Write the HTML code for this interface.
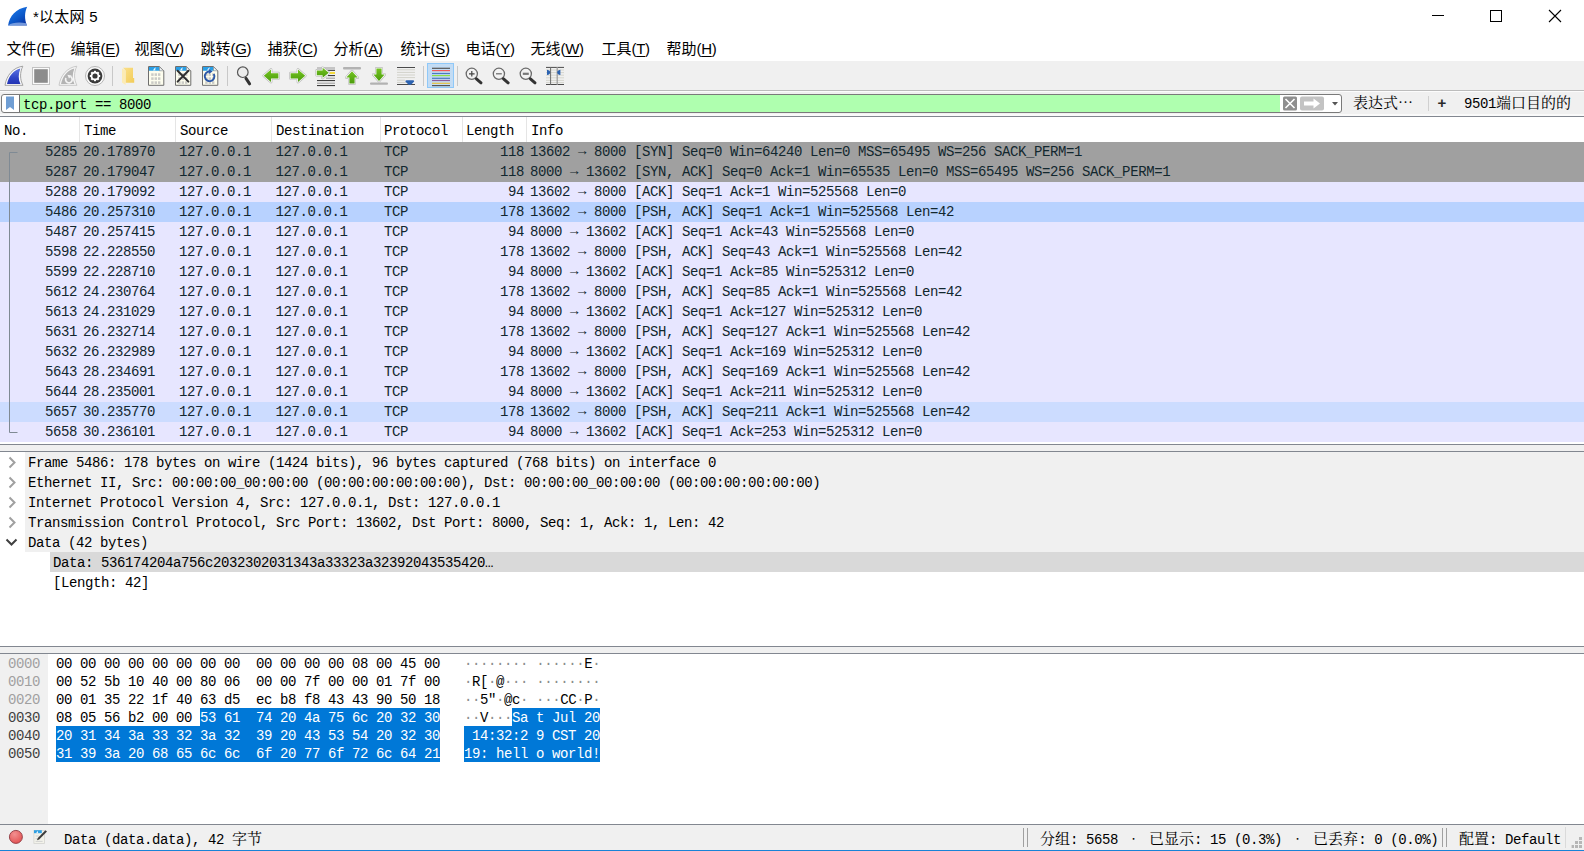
<!DOCTYPE html>
<html lang="zh-CN"><head><meta charset="utf-8"><title>*以太网 5</title>
<style>
*{box-sizing:border-box;margin:0;padding:0}
html,body{width:1584px;height:851px;overflow:hidden;background:#fff}
body{position:relative;font-family:"Liberation Sans","Noto Sans CJK SC",sans-serif;color:#000}
.abs{position:absolute}
.ui{font-family:"Liberation Sans","Noto Sans CJK SC",sans-serif;font-size:15px;white-space:pre}
.mono{font-family:"Liberation Mono","Noto Sans CJK SC",monospace;font-size:14px;letter-spacing:-0.4px;white-space:pre}
.sim{font-family:"Liberation Mono","Noto Serif CJK SC",monospace;font-size:14px;letter-spacing:-0.4px;white-space:pre}
.sim b{font-family:"Noto Serif CJK SC","Noto Sans CJK SC",serif;font-weight:normal;font-size:15px;letter-spacing:0;line-height:0}
.sim em{font-family:"Noto Serif CJK SC","Noto Sans CJK SC",serif;font-style:normal;display:inline-block;width:15px;text-align:center;letter-spacing:0;line-height:0}
#title{left:33px;top:5.5px;height:22px;line-height:22px;font-size:15px;letter-spacing:0.25px}
#menu span{position:absolute;top:38px;height:22px;line-height:22px}
#menu u{text-decoration:underline;text-underline-offset:2px}
#menu i{font-style:normal;letter-spacing:-0.3px}
#tb{left:0;top:61px;width:1584px;height:29px;background:#f0f0f0}
#tbline{left:0;top:90px;width:1584px;height:1px;background:#bcbcbc}
#fbar{left:0;top:91px;width:1584px;height:25px;background:#f0f0f0;border-top:1px solid #fcfcfc;border-bottom:2px solid #fafafa}
#fbox{left:1px;top:94px;width:1341px;height:19px;border:1px solid #7a7a7a;border-radius:3px;background:#fff;overflow:hidden}
#fgreen{left:18px;top:0;width:1260px;height:17px;background:#afffaf}
#hdrline{left:0;top:116px;width:1584px;height:1px;background:#828790}
#hdr{left:0;top:117px;width:1584px;height:25px;background:#fff}
#hdr span{position:absolute;top:0;height:25px;line-height:28px}
#hdr i{position:absolute;top:0;width:1px;height:25px;background:#e5e5e5}
.row{left:0;width:1584px;height:20px;line-height:20px}
.row span{position:absolute;top:0;height:20px}
.row bdi{position:relative;top:-1.5px}
#plist{color:#12272e}
.g{background:#a0a0a0}.l{background:#e7e6ff}.s{background:#b8d2ff}.h{background:#ccdcff}
.line{left:0;width:1584px;height:1px;background:#828790}
.split{left:0;width:1584px;background:#f0f0f0}
.drow{height:20px;line-height:22px}
.hx{height:18px;line-height:20px}
.sel{background:#0078d7;color:#fff}
.off{color:#a0a0a0}.offs{color:#404040}
.dot{color:#8c8c8c}
#status{left:0;top:825px;width:1584px;height:25px;background:#f0f0f0}
#status span{position:absolute;top:0;height:25px;line-height:30px}
#blue{left:0;top:850px;width:1584px;height:1px;background:#1883d7}
</style></head>
<body>
<svg class="abs" style="left:7px;top:6px" width="22" height="21" viewBox="0 0 22 21">
<defs><linearGradient id="fg" x1="0.2" y1="0" x2="0.9" y2="1"><stop offset="0" stop-color="#1c7cf0"/><stop offset="0.55" stop-color="#0c58c8"/><stop offset="1" stop-color="#0a30a0"/></linearGradient></defs>
<path d="M1.1 19.5 C2.5 10 9 2.5 20.2 0.8 C17.6 6 17.2 13 20 19.5 Z" fill="url(#fg)"/>
<path d="M1.1 19.5 C5 16.4 12 16 19.2 17.2 L20 19.5 Z" fill="#86a8e4" opacity="0.85"/>
</svg>
<div id="title" class="abs ui">*以太网 5</div>
<svg class="abs" style="left:1384px;top:0" width="200" height="32" viewBox="0 0 200 32">
<path d="M48 15.5 H60" stroke="#000" stroke-width="1" fill="none"/>
<rect x="106.5" y="10.5" width="11" height="11" stroke="#000" stroke-width="1" fill="none"/>
<path d="M165 10 L177 22 M177 10 L165 22" stroke="#000" stroke-width="1.1" fill="none"/>
</svg>
<div id="menu" class="ui"><span style="left:6.5px">文件<i>(<u>F</u>)</i></span><span style="left:70.5px">编辑<i>(<u>E</u>)</i></span><span style="left:134.5px">视图<i>(<u>V</u>)</i></span><span style="left:200.5px">跳转<i>(<u>G</u>)</i></span><span style="left:267.5px">捕获<i>(<u>C</u>)</i></span><span style="left:333.5px">分析<i>(<u>A</u>)</i></span><span style="left:400.5px">统计<i>(<u>S</u>)</i></span><span style="left:465.5px">电话<i>(<u>Y</u>)</i></span><span style="left:530.5px">无线<i>(<u>W</u>)</i></span><span style="left:601.5px">工具<i>(<u>T</u>)</i></span><span style="left:666.5px">帮助<i>(<u>H</u>)</i></span></div>
<div id="tb" class="abs"></div><div id="tbline" class="abs"></div>
<svg class="abs" style="left:0;top:61px" width="580" height="29" viewBox="0 61 580 29">
<defs>
<linearGradient id="bl" x1="0" y1="0" x2="0" y2="1"><stop offset="0" stop-color="#5c74e4"/><stop offset="0.6" stop-color="#2f45c6"/><stop offset="1" stop-color="#2334b4"/></linearGradient>
<linearGradient id="gr" x1="0" y1="0" x2="0" y2="1"><stop offset="0" stop-color="#74c422"/><stop offset="1" stop-color="#4c9c0c"/></linearGradient>
<linearGradient id="fo" x1="0" y1="0" x2="1" y2="1"><stop offset="0" stop-color="#fbe08a"/><stop offset="1" stop-color="#f2cc58"/></linearGradient>
</defs>
<!-- start capture -->
<path d="M5 85.3 C6.5 75.5 13 67.5 22.8 66.2 C19.8 72.5 19.8 79.5 23 85.3 Z" fill="#fafafa" stroke="#9a9a9a" stroke-width="0.9"/>
<path d="M7 84 C8.6 76 13.6 70 20.4 68.4 C18.2 73.5 18.2 79.3 20.4 84 Z" fill="url(#bl)"/>
<!-- stop -->
<rect x="32.5" y="67.5" width="17" height="17" fill="#fbfbfb" stroke="#c2c2c2" stroke-width="1"/>
<rect x="34.2" y="69.2" width="13.6" height="13.6" fill="#8c8c8c"/>
<!-- restart -->
<path d="M59 85.3 C60.5 75.5 67 67.5 76.8 66.2 C73.8 72.5 73.8 79.5 77 85.3 Z" fill="#f6f6f6" stroke="#c4c4c4" stroke-width="0.9"/>
<path d="M61 84 C62.6 76 67.6 70 74.4 68.4 C72.2 73.5 72.2 79.3 74.4 84 Z" fill="#b4b4b4"/>
<path d="M66 78 A3.3 3.3 0 1 0 70.4 76.6" stroke="#f4f4f4" stroke-width="1.7" fill="none"/><path d="M67.4 74.8 L71.6 75.4 L69 78.4 Z" fill="#f4f4f4"/>
<!-- options gear -->
<circle cx="95" cy="76" r="9.5" fill="#fafafa" stroke="#b0b0b0" stroke-width="0.9"/>
<circle cx="95" cy="76" r="7.4" fill="#3a3a3a"/>
<g stroke="#fff" stroke-width="2.2" stroke-linecap="butt"><path d="M95 70.8 V81.2"/><path d="M89.8 76 H100.2"/><path d="M91.32 72.32 L98.68 79.68"/><path d="M98.68 72.32 L91.32 79.68"/></g>
<circle cx="95" cy="76" r="4.3" fill="#fff"/><circle cx="95" cy="76" r="2.6" fill="#3a3a3a"/>
<path d="M112.5 66 V86" stroke="#c8c8c8" stroke-width="1"/>
<!-- folder -->
<path d="M123 67.8 H133 V78 H134.2 V82.8 H125.5 V70.5 Z" fill="url(#fo)"/>
<path d="M122 68.4 L125.6 70.6 V85 L122 82.6 Z" fill="#fcebb4"/>
<!-- file icons -->
<g transform="translate(148 66)"><path d="M0.5 0.5 H11.5 L15.8 4.8 V19.3 H0.5 Z" fill="#fdfdee" stroke="#6e6e6e" stroke-width="1"/><path d="M1 1 H11.3 L13.6 3.3 V4.8 H1 Z" fill="#2a9fe6"/><path d="M5 4.6 Q5.8 2.2 8 1.2 Q6.8 3 7.4 4.6 Z" fill="#e8f4fd"/><path d="M11.5 0.8 V4.8 H15.5 Z" fill="#f4f4f4" stroke="#8a8a8a" stroke-width="0.6"/><g fill="#cbcbc6"><rect x="3.2" y="7.3" width="2.4" height="2.6"/><rect x="6.6" y="7.3" width="2.4" height="2.6"/><rect x="10" y="7.3" width="2.4" height="2.6"/><rect x="3.2" y="11.3" width="2.4" height="2.6"/><rect x="6.6" y="11.3" width="2.4" height="2.6"/><rect x="10" y="11.3" width="2.4" height="2.6"/><rect x="3.2" y="15.3" width="2.4" height="2.6"/><rect x="6.6" y="15.3" width="2.4" height="2.6"/><rect x="10" y="15.3" width="2.4" height="2.6"/></g></g>
<g transform="translate(175 66)"><path d="M0.5 0.5 H11.5 L15.8 4.8 V19.3 H0.5 Z" fill="#fdfdee" stroke="#6e6e6e" stroke-width="1"/><path d="M1 1 H11.3 L13.6 3.3 V4.8 H1 Z" fill="#2a9fe6"/><path d="M5 4.6 Q5.8 2.2 8 1.2 Q6.8 3 7.4 4.6 Z" fill="#e8f4fd"/><path d="M11.5 0.8 V4.8 H15.5 Z" fill="#f4f4f4" stroke="#8a8a8a" stroke-width="0.6"/><g fill="#cbcbc6"><rect x="3.2" y="7.3" width="2.4" height="2.6"/><rect x="6.6" y="7.3" width="2.4" height="2.6"/><rect x="10" y="7.3" width="2.4" height="2.6"/><rect x="3.2" y="11.3" width="2.4" height="2.6"/><rect x="6.6" y="11.3" width="2.4" height="2.6"/><rect x="10" y="11.3" width="2.4" height="2.6"/><rect x="3.2" y="15.3" width="2.4" height="2.6"/><rect x="6.6" y="15.3" width="2.4" height="2.6"/><rect x="10" y="15.3" width="2.4" height="2.6"/></g></g>
<path d="M177.6 70.8 L188.4 81.6 M188.4 70.8 L177.6 81.6" stroke="#2e2e2e" stroke-width="2" stroke-linecap="round"/>
<g transform="translate(202 66)"><path d="M0.5 0.5 H11.5 L15.8 4.8 V19.3 H0.5 Z" fill="#fdfdee" stroke="#6e6e6e" stroke-width="1"/><path d="M1 1 H11.3 L13.6 3.3 V4.8 H1 Z" fill="#2a9fe6"/><path d="M5 4.6 Q5.8 2.2 8 1.2 Q6.8 3 7.4 4.6 Z" fill="#e8f4fd"/><path d="M11.5 0.8 V4.8 H15.5 Z" fill="#f4f4f4" stroke="#8a8a8a" stroke-width="0.6"/><g fill="#cbcbc6"><rect x="3.2" y="7.3" width="2.4" height="2.6"/><rect x="6.6" y="7.3" width="2.4" height="2.6"/><rect x="10" y="7.3" width="2.4" height="2.6"/><rect x="3.2" y="11.3" width="2.4" height="2.6"/><rect x="6.6" y="11.3" width="2.4" height="2.6"/><rect x="10" y="11.3" width="2.4" height="2.6"/><rect x="3.2" y="15.3" width="2.4" height="2.6"/><rect x="6.6" y="15.3" width="2.4" height="2.6"/><rect x="10" y="15.3" width="2.4" height="2.6"/></g></g>
<path d="M213.8 74 A4.8 4.8 0 1 1 209.6 71.5" stroke="#2c58a8" stroke-width="1.9" fill="none"/><path d="M208.8 69 L212.6 71.4 L208.8 74 Z" fill="#2c58a8"/>
<path d="M227.5 66 V86" stroke="#c8c8c8" stroke-width="1"/>
<!-- find -->
<circle cx="242.8" cy="72.2" r="5.3" fill="#ececec" stroke="#555" stroke-width="1.2"/><path d="M246 78.4 L249.6 83.8" stroke="#333" stroke-width="3" stroke-linecap="round"/>
<!-- back / forward -->
<path d="M263.8 75.7 L271 69.6 V73.2 H278.4 V78.4 H271 V82 Z" fill="none" stroke="#b9b9b9" stroke-width="2.8" stroke-linejoin="round"/><path d="M263.8 75.7 L271 69.6 V73.2 H278.4 V78.4 H271 V82 Z" fill="url(#gr)" stroke="#fbfbfb" stroke-width="1.5" stroke-linejoin="round" style="paint-order:stroke"/>
<path d="M305.2 75.7 L298 69.6 V73.2 H290.6 V78.4 H298 V82 Z" fill="none" stroke="#b9b9b9" stroke-width="2.8" stroke-linejoin="round"/><path d="M305.2 75.7 L298 69.6 V73.2 H290.6 V78.4 H298 V82 Z" fill="url(#gr)" stroke="#fbfbfb" stroke-width="1.5" stroke-linejoin="round" style="paint-order:stroke"/>
<!-- goto -->
<g stroke-width="1"><path d="M317 68 H335" stroke="#9a9a9a"/><path d="M326 70.3 H335" stroke="#2a2a2a"/><path d="M329 73 H335" stroke="#f5d828" stroke-width="1.8"/><path d="M328 75.6 H335" stroke="#2a2a2a"/><path d="M326 78.2 H335" stroke="#9a9a9a"/><path d="M317 80.6 H335" stroke="#2a2a2a"/><path d="M317 83.2 H335" stroke="#9a9a9a"/><path d="M317 85.6 H335" stroke="#2a2a2a"/></g>
<path d="M316.8 70.4 H322.6 V67.8 L328.8 72.8 L322.6 77.8 V75.2 H316.8 Z" fill="none" stroke="#b9b9b9" stroke-width="2.8" stroke-linejoin="round"/><path d="M316.8 70.4 H322.6 V67.8 L328.8 72.8 L322.6 77.8 V75.2 H316.8 Z" fill="url(#gr)" stroke="#fbfbfb" stroke-width="1.5" stroke-linejoin="round" style="paint-order:stroke"/>
<!-- first -->
<rect x="343" y="67" width="18" height="2.4" rx="1" fill="#b2b2b2"/>
<path d="M352 71.2 L357.6 77.6 H354.6 V83.6 H349.4 V77.6 H346.4 Z" fill="none" stroke="#b9b9b9" stroke-width="2.8" stroke-linejoin="round"/><path d="M352 71.2 L357.6 77.6 H354.6 V83.6 H349.4 V77.6 H346.4 Z" fill="url(#gr)" stroke="#fbfbfb" stroke-width="1.5" stroke-linejoin="round" style="paint-order:stroke"/>
<!-- last -->
<rect x="370" y="82.4" width="18" height="2.4" rx="1" fill="#b2b2b2"/>
<path d="M379 81 L384.6 74.6 H381.6 V68.4 H376.4 V74.6 H373.4 Z" fill="none" stroke="#b9b9b9" stroke-width="2.8" stroke-linejoin="round"/><path d="M379 81 L384.6 74.6 H381.6 V68.4 H376.4 V74.6 H373.4 Z" fill="url(#gr)" stroke="#fbfbfb" stroke-width="1.5" stroke-linejoin="round" style="paint-order:stroke"/>
<!-- autoscroll -->
<path d="M397 67.5 H415" stroke="#4a4a4a" stroke-width="1"/><g stroke="#d2d2ca" stroke-width="1"><path d="M397 69.8 H415"/><path d="M397 72.4 H415"/><path d="M397 75 H415"/><path d="M397 77.6 H415"/><path d="M397 80.2 H405"/><path d="M397 82.4 H407"/></g><path d="M397 84.5 H415" stroke="#4a4a4a" stroke-width="1"/>
<path d="M405.4 81.4 Q405.4 80.2 406.6 80.2 H413 Q414.2 80.2 414.2 81.4 L411 84.8 H408.6 Z" fill="#2c62b0"/>
<path d="M423.5 66 V86" stroke="#c8c8c8" stroke-width="1"/>
<!-- colorize (checked) -->
<rect x="427.5" y="63.5" width="26" height="24" fill="#c3dcf4" stroke="#8fc8f8" stroke-width="1"/>
<g stroke-width="1.2"><path d="M432 68.3 H450" stroke="#555"/><path d="M432 70.6 H450" stroke="#f25a5a"/><path d="M432 73.5 H450" stroke="#4a7ac0"/><path d="M432 75.6 H450" stroke="#8ede48"/><path d="M432 78.3 H450" stroke="#4a7ac0"/><path d="M432 80.5 H450" stroke="#8c5c9c"/><path d="M432 83.3 H450" stroke="#e6c040"/><path d="M432 85.6 H450" stroke="#555"/></g>
<path d="M457.5 66 V86" stroke="#c8c8c8" stroke-width="1"/>
<!-- zoom in/out/reset -->
<g transform="translate(471.8 73.8)"><circle cx="0" cy="0" r="5.6" fill="#f2f2f2" stroke="#6a6a6a" stroke-width="1.3"/><path d="M4.6 5 L9.2 9" stroke="#333" stroke-width="3" stroke-linecap="round"/></g><path d="M469 73.8 H474.6 M471.8 71 V76.6" stroke="#444" stroke-width="1.2"/>
<g transform="translate(498.9 73.8)"><circle cx="0" cy="0" r="5.6" fill="#f2f2f2" stroke="#6a6a6a" stroke-width="1.3"/><path d="M4.6 5 L9.2 9" stroke="#333" stroke-width="3" stroke-linecap="round"/></g><path d="M496 73.8 H501.8" stroke="#666" stroke-width="1.2"/>
<g transform="translate(525.8 73.8)"><circle cx="0" cy="0" r="5.6" fill="#f2f2f2" stroke="#6a6a6a" stroke-width="1.3"/><path d="M4.6 5 L9.2 9" stroke="#333" stroke-width="3" stroke-linecap="round"/></g><path d="M522.8 73.8 H528.8" stroke="#777" stroke-width="2.2"/>
<!-- resize columns -->
<g stroke="#d6d6ce" stroke-width="1"><path d="M546 70 H564"/><path d="M546 72.6 H564"/><path d="M546 75.2 H564"/><path d="M546 77.8 H564"/><path d="M546 80.4 H564"/><path d="M546 82.6 H564"/></g>
<path d="M546 67.4 H564 M546 84.5 H564" stroke="#4a4a4a" stroke-width="1"/>
<path d="M550.6 67 V85" stroke="#6a6a6a" stroke-width="1"/><path d="M557.2 67 V85" stroke="#9a9a9a" stroke-width="1.2"/>
<path d="M547 69.8 Q550.4 70.6 550.2 72.4 Q550.4 74.2 547 75 Z" fill="#2c62b0"/><path d="M560.4 69.8 Q557 70.6 557.2 72.4 Q557 74.2 560.4 75 Z" fill="#2c62b0"/>
</svg>
<div id="fbar" class="abs"></div>
<div id="fbox" class="abs"><div id="fgreen" class="abs"></div><div class="abs" style="left:17px;top:0;width:1px;height:17px;background:#6e6e6e"></div>
<svg class="abs" style="left:3px;top:1px" width="10" height="15" viewBox="0 0 10 15"><path d="M1 0.5 H9 V14 L5 11 L1 14 Z" fill="#6f9ed4"/></svg>
<span class="abs sim" style="left:21px;top:0;height:17px;line-height:20px">tcp.port == 8000</span>
<svg class="abs" style="left:1280px;top:1px" width="58" height="15" viewBox="0 0 58 15">
<rect x="1" y="0.5" width="14" height="14" rx="1.5" fill="#8f8f8f"/><path d="M3.5 3 L12.5 12 M12.5 3 L3.5 12" stroke="#fff" stroke-width="1.6"/>
<rect x="18" y="0.5" width="24" height="14" rx="2" fill="#c3c3c3"/><path d="M22 5.5 H31.5 V2.5 L38 7.5 L31.5 12.5 V9.5 H22 Z" fill="#fff"/>
<path d="M50 6 H56 L53 9.5 Z" fill="#555"/>
</svg>
</div>
<span class="abs sim" style="left:1353px;top:94px;height:19px;line-height:21px"><b>表达式…</b></span>
<div class="abs" style="left:1428px;top:96px;width:1px;height:15px;background:#d0d0d0"></div>
<span class="abs" style="left:1437.5px;top:93px;height:19px;line-height:19px;font-size:15px;font-weight:bold;color:#2a2a2a;font-family:'Liberation Sans',sans-serif">+</span>
<span class="abs sim" style="left:1464px;top:94px;height:19px;line-height:21px">9501<b>端口目的的</b></span>
<div id="hdrline" class="abs"></div>
<div id="hdr" class="abs sim"><span style="left:4px">No.</span><span style="left:84px">Time</span><span style="left:180px">Source</span><span style="left:276px">Destination</span><span style="left:384px">Protocol</span><span style="left:466px">Length</span><span style="left:531px">Info</span><i style="left:79px"></i><i style="left:175px"></i><i style="left:271px"></i><i style="left:380px"></i><i style="left:462px"></i><i style="left:526px"></i></div>
<div id="plist" class="mono">
<div class="abs row g" style="top:142px"><span style="left:45px">5285</span><span style="left:83px">20.178970</span><span style="left:179px">127.0.0.1</span><span style="left:275.5px">127.0.0.1</span><span style="left:384px">TCP</span><span style="left:500px">118</span><span style="left:530px">13602 <bdi>→</bdi> 8000 [SYN] Seq=0 Win=64240 Len=0 MSS=65495 WS=256 SACK_PERM=1</span></div>
<div class="abs row g" style="top:162px"><span style="left:45px">5287</span><span style="left:83px">20.179047</span><span style="left:179px">127.0.0.1</span><span style="left:275.5px">127.0.0.1</span><span style="left:384px">TCP</span><span style="left:500px">118</span><span style="left:530px">8000 <bdi>→</bdi> 13602 [SYN, ACK] Seq=0 Ack=1 Win=65535 Len=0 MSS=65495 WS=256 SACK_PERM=1</span></div>
<div class="abs row l" style="top:182px"><span style="left:45px">5288</span><span style="left:83px">20.179092</span><span style="left:179px">127.0.0.1</span><span style="left:275.5px">127.0.0.1</span><span style="left:384px">TCP</span><span style="left:508px">94</span><span style="left:530px">13602 <bdi>→</bdi> 8000 [ACK] Seq=1 Ack=1 Win=525568 Len=0</span></div>
<div class="abs row s" style="top:202px"><span style="left:45px">5486</span><span style="left:83px">20.257310</span><span style="left:179px">127.0.0.1</span><span style="left:275.5px">127.0.0.1</span><span style="left:384px">TCP</span><span style="left:500px">178</span><span style="left:530px">13602 <bdi>→</bdi> 8000 [PSH, ACK] Seq=1 Ack=1 Win=525568 Len=42</span></div>
<div class="abs row l" style="top:222px"><span style="left:45px">5487</span><span style="left:83px">20.257415</span><span style="left:179px">127.0.0.1</span><span style="left:275.5px">127.0.0.1</span><span style="left:384px">TCP</span><span style="left:508px">94</span><span style="left:530px">8000 <bdi>→</bdi> 13602 [ACK] Seq=1 Ack=43 Win=525568 Len=0</span></div>
<div class="abs row l" style="top:242px"><span style="left:45px">5598</span><span style="left:83px">22.228550</span><span style="left:179px">127.0.0.1</span><span style="left:275.5px">127.0.0.1</span><span style="left:384px">TCP</span><span style="left:500px">178</span><span style="left:530px">13602 <bdi>→</bdi> 8000 [PSH, ACK] Seq=43 Ack=1 Win=525568 Len=42</span></div>
<div class="abs row l" style="top:262px"><span style="left:45px">5599</span><span style="left:83px">22.228710</span><span style="left:179px">127.0.0.1</span><span style="left:275.5px">127.0.0.1</span><span style="left:384px">TCP</span><span style="left:508px">94</span><span style="left:530px">8000 <bdi>→</bdi> 13602 [ACK] Seq=1 Ack=85 Win=525312 Len=0</span></div>
<div class="abs row l" style="top:282px"><span style="left:45px">5612</span><span style="left:83px">24.230764</span><span style="left:179px">127.0.0.1</span><span style="left:275.5px">127.0.0.1</span><span style="left:384px">TCP</span><span style="left:500px">178</span><span style="left:530px">13602 <bdi>→</bdi> 8000 [PSH, ACK] Seq=85 Ack=1 Win=525568 Len=42</span></div>
<div class="abs row l" style="top:302px"><span style="left:45px">5613</span><span style="left:83px">24.231029</span><span style="left:179px">127.0.0.1</span><span style="left:275.5px">127.0.0.1</span><span style="left:384px">TCP</span><span style="left:508px">94</span><span style="left:530px">8000 <bdi>→</bdi> 13602 [ACK] Seq=1 Ack=127 Win=525312 Len=0</span></div>
<div class="abs row l" style="top:322px"><span style="left:45px">5631</span><span style="left:83px">26.232714</span><span style="left:179px">127.0.0.1</span><span style="left:275.5px">127.0.0.1</span><span style="left:384px">TCP</span><span style="left:500px">178</span><span style="left:530px">13602 <bdi>→</bdi> 8000 [PSH, ACK] Seq=127 Ack=1 Win=525568 Len=42</span></div>
<div class="abs row l" style="top:342px"><span style="left:45px">5632</span><span style="left:83px">26.232989</span><span style="left:179px">127.0.0.1</span><span style="left:275.5px">127.0.0.1</span><span style="left:384px">TCP</span><span style="left:508px">94</span><span style="left:530px">8000 <bdi>→</bdi> 13602 [ACK] Seq=1 Ack=169 Win=525312 Len=0</span></div>
<div class="abs row l" style="top:362px"><span style="left:45px">5643</span><span style="left:83px">28.234691</span><span style="left:179px">127.0.0.1</span><span style="left:275.5px">127.0.0.1</span><span style="left:384px">TCP</span><span style="left:500px">178</span><span style="left:530px">13602 <bdi>→</bdi> 8000 [PSH, ACK] Seq=169 Ack=1 Win=525568 Len=42</span></div>
<div class="abs row l" style="top:382px"><span style="left:45px">5644</span><span style="left:83px">28.235001</span><span style="left:179px">127.0.0.1</span><span style="left:275.5px">127.0.0.1</span><span style="left:384px">TCP</span><span style="left:508px">94</span><span style="left:530px">8000 <bdi>→</bdi> 13602 [ACK] Seq=1 Ack=211 Win=525312 Len=0</span></div>
<div class="abs row h" style="top:402px"><span style="left:45px">5657</span><span style="left:83px">30.235770</span><span style="left:179px">127.0.0.1</span><span style="left:275.5px">127.0.0.1</span><span style="left:384px">TCP</span><span style="left:500px">178</span><span style="left:530px">13602 <bdi>→</bdi> 8000 [PSH, ACK] Seq=211 Ack=1 Win=525568 Len=42</span></div>
<div class="abs row l" style="top:422px"><span style="left:45px">5658</span><span style="left:83px">30.236101</span><span style="left:179px">127.0.0.1</span><span style="left:275.5px">127.0.0.1</span><span style="left:384px">TCP</span><span style="left:508px">94</span><span style="left:530px">8000 <bdi>→</bdi> 13602 [ACK] Seq=1 Ack=253 Win=525312 Len=0</span></div>
</div>
<svg class="abs" style="left:0;top:142px" width="24" height="300" viewBox="0 0 24 300"><path d="M17.5 10.5 H9.5 V290.5 H17.5" stroke="#7f8a94" stroke-width="1" fill="none"/></svg>
<div class="abs line" style="top:444px"></div><div class="abs split" style="top:445px;height:6px"></div><div class="abs line" style="top:451px"></div>
<div id="details" class="mono">
<div class="abs drow" style="left:25px;top:452px;width:1559px;background:#f0f0f0"><span class="abs" style="left:3px;top:0">Frame 5486: 178 bytes on wire (1424 bits), 96 bytes captured (768 bits) on interface 0</span></div><svg class="abs" style="left:6px;top:452px" width="14" height="20" viewBox="0 0 14 20"><path d="M3.5 5.5 L8.5 10.5 L3.5 15.5" stroke="#a0a0a0" stroke-width="2" fill="none"/></svg>
<div class="abs drow" style="left:25px;top:472px;width:1559px;background:#f0f0f0"><span class="abs" style="left:3px;top:0">Ethernet II, Src: 00:00:00_00:00:00 (00:00:00:00:00:00), Dst: 00:00:00_00:00:00 (00:00:00:00:00:00)</span></div><svg class="abs" style="left:6px;top:472px" width="14" height="20" viewBox="0 0 14 20"><path d="M3.5 5.5 L8.5 10.5 L3.5 15.5" stroke="#a0a0a0" stroke-width="2" fill="none"/></svg>
<div class="abs drow" style="left:25px;top:492px;width:1559px;background:#f0f0f0"><span class="abs" style="left:3px;top:0">Internet Protocol Version 4, Src: 127.0.0.1, Dst: 127.0.0.1</span></div><svg class="abs" style="left:6px;top:492px" width="14" height="20" viewBox="0 0 14 20"><path d="M3.5 5.5 L8.5 10.5 L3.5 15.5" stroke="#a0a0a0" stroke-width="2" fill="none"/></svg>
<div class="abs drow" style="left:25px;top:512px;width:1559px;background:#f0f0f0"><span class="abs" style="left:3px;top:0">Transmission Control Protocol, Src Port: 13602, Dst Port: 8000, Seq: 1, Ack: 1, Len: 42</span></div><svg class="abs" style="left:6px;top:512px" width="14" height="20" viewBox="0 0 14 20"><path d="M3.5 5.5 L8.5 10.5 L3.5 15.5" stroke="#a0a0a0" stroke-width="2" fill="none"/></svg>
<div class="abs drow" style="left:25px;top:532px;width:1559px;background:#f0f0f0"><span class="abs" style="left:3px;top:0">Data (42 bytes)</span></div><svg class="abs" style="left:0px;top:532px" width="24" height="20" viewBox="0 0 24 20"><path d="M6.5 7.5 L11.5 12.5 L16.5 7.5" stroke="#404040" stroke-width="2" fill="none"/></svg>
<div class="abs drow" style="left:50px;top:552px;width:1534px;background:#d9d9d9"><span class="abs" style="left:3px;top:0">Data: 536174204a756c2032302031343a33323a32392043535420…</span></div>
<div class="abs drow" style="left:50px;top:572px;width:1534px;background:transparent"><span class="abs" style="left:3px;top:0">[Length: 42]</span></div>
</div>
<div class="abs line" style="top:646px"></div><div class="abs split" style="top:647px;height:6px"></div><div class="abs line" style="top:653px"></div>
<div class="abs" style="left:0;top:654px;width:48px;height:170px;background:#f0f0f0"></div>
<div id="hex" class="mono">
<div class="abs hx off" style="left:8px;top:654px">0000</div><div class="abs hx" style="left:56px;top:654px">00 00 00 00 00 00 00 00  00 00 00 00 08 00 45 00</div><div class="abs hx" style="left:464px;top:654px"><span class="dot">·</span><span class="dot">·</span><span class="dot">·</span><span class="dot">·</span><span class="dot">·</span><span class="dot">·</span><span class="dot">·</span><span class="dot">·</span> <span class="dot">·</span><span class="dot">·</span><span class="dot">·</span><span class="dot">·</span><span class="dot">·</span><span class="dot">·</span>E<span class="dot">·</span></div>
<div class="abs hx off" style="left:8px;top:672px">0010</div><div class="abs hx" style="left:56px;top:672px">00 52 5b 10 40 00 80 06  00 00 7f 00 00 01 7f 00</div><div class="abs hx" style="left:464px;top:672px"><span class="dot">·</span>R[<span class="dot">·</span>@<span class="dot">·</span><span class="dot">·</span><span class="dot">·</span> <span class="dot">·</span><span class="dot">·</span><span class="dot">·</span><span class="dot">·</span><span class="dot">·</span><span class="dot">·</span><span class="dot">·</span><span class="dot">·</span></div>
<div class="abs hx off" style="left:8px;top:690px">0020</div><div class="abs hx" style="left:56px;top:690px">00 01 35 22 1f 40 63 d5  ec b8 f8 43 43 90 50 18</div><div class="abs hx" style="left:464px;top:690px"><span class="dot">·</span><span class="dot">·</span>5&quot;<span class="dot">·</span>@c<span class="dot">·</span> <span class="dot">·</span><span class="dot">·</span><span class="dot">·</span>CC<span class="dot">·</span>P<span class="dot">·</span></div>
<div class="abs hx offs" style="left:8px;top:708px">0030</div><div class="abs hx" style="left:56px;top:708px">08 05 56 b2 00 00 <span class="sel" style="display:inline-block;height:18px;vertical-align:top">53 61  74 20 4a 75 6c 20 32 30</span></div><div class="abs hx" style="left:464px;top:708px"><span class="dot">·</span><span class="dot">·</span>V<span class="dot">·</span><span class="dot">·</span><span class="dot">·</span><span class="sel" style="display:inline-block;height:18px;vertical-align:top">Sa t Jul 20</span></div>
<div class="abs hx offs" style="left:8px;top:726px">0040</div><div class="abs hx" style="left:56px;top:726px"><span class="sel" style="display:inline-block;height:18px;vertical-align:top">20 31 34 3a 33 32 3a 32  39 20 43 53 54 20 32 30</span></div><div class="abs hx" style="left:464px;top:726px"><span class="sel" style="display:inline-block;height:18px;vertical-align:top"> 14:32:2 9 CST 20</span></div>
<div class="abs hx offs" style="left:8px;top:744px">0050</div><div class="abs hx" style="left:56px;top:744px"><span class="sel" style="display:inline-block;height:18px;vertical-align:top">31 39 3a 20 68 65 6c 6c  6f 20 77 6f 72 6c 64 21</span></div><div class="abs hx" style="left:464px;top:744px"><span class="sel" style="display:inline-block;height:18px;vertical-align:top">19: hell o world!</span></div>
</div>
<div class="abs line" style="top:824px"></div>
<div id="status" class="abs sim"><svg class="abs" style="left:8px;top:4px" width="16" height="16" viewBox="0 0 16 16"><defs><radialGradient id="rg" cx="0.4" cy="0.3" r="0.75"><stop offset="0" stop-color="#f29090"/><stop offset="1" stop-color="#e25050"/></radialGradient></defs><circle cx="7.9" cy="7.9" r="6.5" fill="url(#rg)" stroke="#8e3a42" stroke-width="0.9"/></svg><svg class="abs" style="left:33px;top:4px" width="15" height="16" viewBox="0 0 15 16"><rect x="0.9" y="1.4" width="10.6" height="13" fill="#f2f2ea" stroke="#d4d4d0" stroke-width="0.8"/><path d="M1 1.2 H8.8 V4.2 H1 Z" fill="#2f9fe2"/><path d="M3.2 4.2 Q3.8 2.6 5 2 Q4.6 3.2 5.4 4.2 Z" fill="#eef6fc"/><path d="M2.6 7 H6 M2.6 9.8 H5 M2.6 12.4 H9.6" stroke="#d2d2d2" stroke-width="1"/><path d="M12.4 1.2 L14 2.6 L6.2 10.4 L4 11.2 L4.8 9 Z" fill="#3c3c3c"/></svg><span style="left:64px">Data (data.data), 42 <b>字节</b></span><i class="abs" style="left:1023px;top:3px;width:1px;height:19px;background:#a0a0a0"></i><i class="abs" style="left:1027px;top:3px;width:1px;height:19px;background:#a0a0a0"></i><span style="left:1040px"><b>分组</b>: 5658 <em>·</em> <b>已显示</b>: 15 (0.3%) <em>·</em> <b>已丢弃</b>: 0 (0.0%)</span><i class="abs" style="left:1442px;top:3px;width:1px;height:19px;background:#a0a0a0"></i><i class="abs" style="left:1446px;top:3px;width:1px;height:19px;background:#a0a0a0"></i><span style="left:1459px"><b>配置</b>: Default</span><i class="abs" style="left:1565px;top:2px;width:1px;height:21px;background:#dadada"></i><svg class="abs" style="left:1570px;top:11px" width="14" height="13" viewBox="1570 836 14 13"><g fill="#b6b6b6"><rect x="1579" y="837" width="3" height="3"/><rect x="1575" y="841" width="3" height="3"/><rect x="1579" y="841" width="3" height="3"/><rect x="1571.6" y="845" width="2.4" height="3"/><rect x="1575" y="845" width="3" height="3"/><rect x="1579" y="845" width="3" height="3"/></g></svg></div>
<div id="blue" class="abs"></div>
</body></html>
